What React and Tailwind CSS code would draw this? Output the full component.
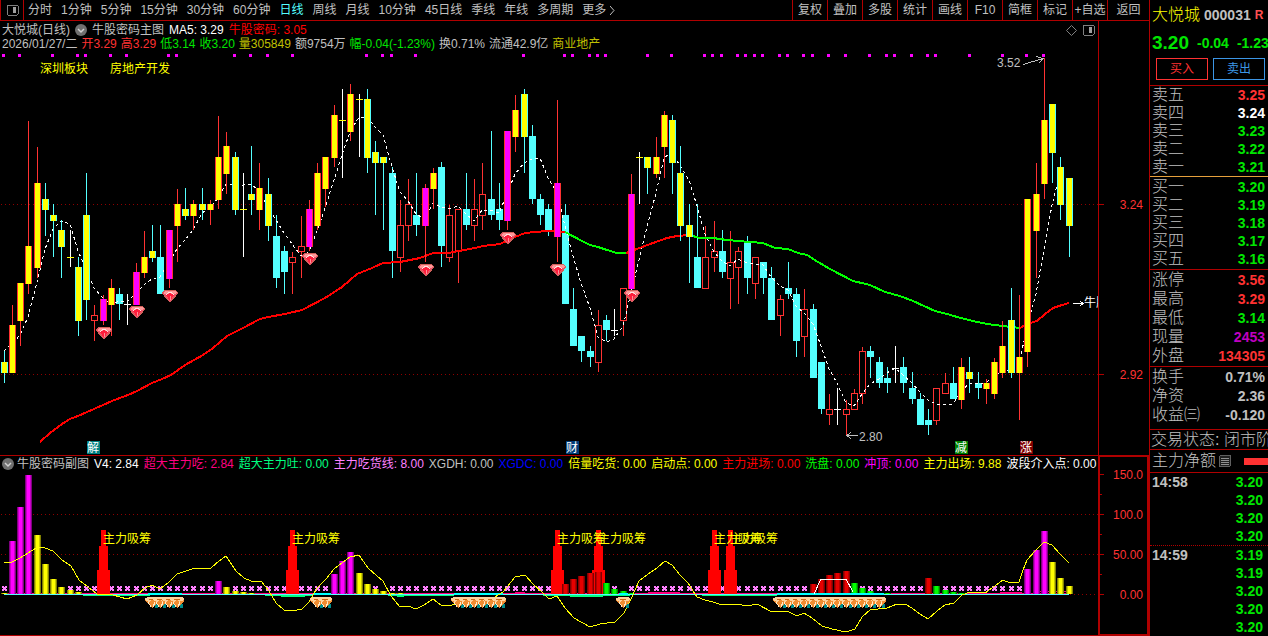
import { useState } from 'react';

const periods = ['分时', '1分钟', '5分钟', '15分钟', '30分钟', '60分钟', '日线', '周线', '月线', '10分钟', '45日线', '季线', '年线', '多周期'];
const tools = ['复权', '叠加', '多股', '统计', '画线', 'F10', '简框', '标记', '+自选'];

const quote = [
  { text: '2026/01/27/二', color: 'text-[#c0c0c0]' },
  { text: '开3.29', color: 'text-[#ff3232]' },
  { text: '高3.29', color: 'text-[#ff3232]' },
  { text: '低3.14', color: 'text-[#00e600]' },
  { text: '收3.20', color: 'text-[#00e600]' },
  { text: '量305849', color: 'text-[#c0c000]' },
  { text: '额9754万', color: 'text-[#c0c0c0]' },
  { text: '幅-0.04(-1.23%)', color: 'text-[#00e600]' },
  { text: '换0.71%', color: 'text-[#c0c0c0]' },
  { text: '流通42.9亿', color: 'text-[#c0c0c0]' },
  { text: '商业地产', color: 'text-[#c0c000]' },
];

const indicators = [
  { text: 'V4: 2.84', color: 'text-white' },
  { text: '超大主力吃: 2.84', color: 'text-[#ff0080]' },
  { text: '超大主力吐: 0.00', color: 'text-[#00ff80]' },
  { text: '主力吃货线: 8.00', color: 'text-[#ff80ff]' },
  { text: 'XGDH: 0.00', color: 'text-[#c0c0c0]' },
  { text: 'XGDC: 0.00', color: 'text-[#0000ff]' },
  { text: '倍量吃货: 0.00', color: 'text-[#ffff00]' },
  { text: '启动点: 0.00', color: 'text-[#ffff00]' },
  { text: '主力进场: 0.00', color: 'text-[#ff0000]' },
  { text: '洗盘: 0.00', color: 'text-[#00ff00]' },
  { text: '冲顶: 0.00', color: 'text-[#ff00ff]' },
  { text: '主力出场: 9.88', color: 'text-[#ffff00]' },
  { text: '波段介入点: 0.00', color: 'text-white' },
];

const RED = 'text-[#ff3232]';
const GREEN = 'text-[#00e600]';
const GRAY = 'text-[#c0c0c0]';

const asks = [
  ['卖五', '3.25', RED],
  ['卖四', '3.24', 'text-white'],
  ['卖三', '3.23', GREEN],
  ['卖二', '3.22', GREEN],
  ['卖一', '3.21', GREEN],
];
const bids = [
  ['买一', '3.20', GREEN],
  ['买二', '3.19', GREEN],
  ['买三', '3.18', GREEN],
  ['买四', '3.17', GREEN],
  ['买五', '3.16', GREEN],
];
const stats = [
  ['涨停', '3.56', RED],
  ['最高', '3.29', RED],
  ['最低', '3.14', GREEN],
  ['现量', '2453', 'text-[#c000c0]'],
  ['外盘', '134305', RED],
];
const ratios = [
  ['换手', '0.71%', GRAY],
  ['净资', '2.36', GRAY],
  ['收益㈢', '-0.120', GRAY],
];
const ticks1458 = [['14:58', '3.20', GREEN], ['', '3.20', GREEN], ['', '3.20', GREEN], ['', '3.20', GREEN]];
const ticks1459 = [['14:59', '3.19', GREEN], ['', '3.19', GREEN], ['', '3.20', GREEN], ['', '3.20', GREEN], ['', '3.20', GREEN]];

// [kind, high, body top, body bottom, low]
// yu/yd: yellow up/down, m: magenta, r: hollow up, c: down, w: doji, wy: yellow doji
const candles = [
  ['yd', 351, 362, 373, 383], ['yu', 305, 325, 373, 373], ['yu', 283, 283, 321, 346], ['yu', 121, 246, 284, 294],
  ['yu', 147, 183, 268, 278], ['yd', 183, 199, 210, 236], ['yd', 204, 215, 221, 257], ['yd', 220, 230, 247, 278],
  ['wy', 230, 257, 258, 267], ['yd', 257, 267, 321, 336], ['yd', 173, 215, 300, 320], ['r', 305, 315, 321, 341],
  ['m', 295, 299, 321, 325], ['yu', 279, 288, 305, 336], ['c', 288, 294, 304, 320], ['w', 294, 304, 305, 325],
  ['m', 263, 272, 305, 305], ['yu', 231, 257, 273, 278], ['yd', 225, 251, 258, 262], ['c', 225, 257, 294, 294],
  ['m', 230, 230, 279, 288], ['yu', 189, 204, 226, 262], ['yd', 188, 209, 216, 220], ['yu', 200, 204, 216, 230],
  ['yd', 188, 204, 210, 220], ['yu', 200, 204, 210, 225], ['yu', 116, 157, 200, 209], ['yu', 132, 146, 174, 194],
  ['yd', 152, 157, 210, 215], ['wy', 173, 209, 210, 257], ['yd', 146, 194, 200, 215], ['yu', 163, 188, 210, 230],
  ['yd', 178, 194, 226, 241], ['c', 215, 236, 278, 288], ['c', 246, 251, 272, 294], ['r', 252, 257, 263, 294],
  ['r', 216, 246, 252, 278], ['m', 200, 209, 247, 251], ['yu', 163, 173, 226, 230], ['yu', 157, 157, 189, 207],
  ['yu', 105, 115, 158, 167], ['wy', 89, 120, 121, 178], ['yu', 84, 94, 132, 141], ['wy', 94, 99, 100, 157],
  ['yd', 89, 99, 158, 173], ['yd', 141, 152, 163, 215], ['yd', 157, 157, 163, 230], ['c', 167, 173, 251, 278],
  ['r', 200, 225, 258, 272], ['r', 179, 204, 226, 241], ['c', 173, 215, 225, 236], ['m', 184, 188, 226, 262],
  ['yu', 168, 173, 189, 209], ['c', 162, 167, 246, 267], ['r', 205, 215, 258, 262], ['r', 209, 209, 252, 283],
  ['c', 173, 209, 225, 230], ['r', 179, 209, 226, 241], ['r', 163, 194, 216, 230], ['c', 131, 199, 215, 220],
  ['c', 183, 209, 220, 230], ['m', 131, 131, 221, 230], ['yu', 95, 110, 137, 152], ['yd', 89, 94, 137, 173],
  ['c', 125, 136, 199, 204], ['c', 194, 199, 215, 225], ['c', 204, 209, 230, 236], ['m', 100, 183, 237, 262],
  ['c', 204, 215, 304, 304], ['c', 288, 309, 346, 346], ['c', 336, 336, 351, 362], ['c', 346, 351, 357, 367],
  ['r', 310, 325, 363, 372], ['c', 315, 320, 330, 341], ['w', 309, 330, 331, 336], ['r', 288, 288, 321, 336],
  ['m', 174, 194, 289, 289], ['wy', 152, 157, 158, 204], ['yd', 157, 157, 168, 194], ['yu', 137, 157, 174, 178],
  ['yu', 111, 115, 147, 178], ['yd', 115, 120, 163, 194], ['yd', 146, 173, 226, 241], ['yd', 204, 225, 237, 283],
  ['c', 204, 257, 288, 288], ['r', 226, 257, 289, 289], ['r', 221, 251, 258, 272], ['c', 230, 251, 272, 278],
  ['r', 231, 262, 279, 309], ['r', 247, 251, 268, 304], ['c', 236, 242, 278, 294], ['r', 257, 257, 284, 299],
  ['c', 262, 262, 278, 294], ['c', 267, 278, 320, 320], ['r', 295, 299, 316, 336], ['c', 262, 288, 294, 299],
  ['c', 288, 294, 341, 357], ['r', 289, 309, 337, 357], ['c', 304, 309, 378, 378], ['c', 362, 362, 409, 414],
  ['r', 394, 409, 415, 425], ['w', 388, 409, 410, 425], ['r', 400, 409, 415, 435], ['r', 389, 393, 410, 410],
  ['r', 347, 351, 394, 404], ['c', 346, 351, 357, 378], ['c', 357, 362, 383, 388], ['c', 367, 378, 383, 393],
  ['w', 346, 368, 369, 383], ['c', 357, 367, 383, 393], ['c', 372, 388, 399, 404], ['c', 393, 399, 425, 425],
  ['c', 409, 420, 425, 435], ['r', 388, 388, 421, 425], ['r', 373, 383, 394, 394], ['c', 367, 383, 399, 399],
  ['yu', 358, 367, 400, 409], ['yd', 357, 372, 379, 393], ['c', 372, 383, 388, 399], ['yu', 379, 383, 389, 404],
  ['yu', 358, 362, 394, 399], ['yu', 321, 346, 373, 378], ['yd', 288, 320, 373, 378], ['yu', 295, 357, 373, 420],
  ['yu', 199, 199, 352, 367], ['yu', 163, 194, 231, 278], ['yu', 58, 120, 184, 199], ['yd', 104, 104, 153, 183],
  ['yd', 157, 167, 205, 220], ['yd', 178, 178, 226, 257],
];

const xOf = (i) => Math.floor(4 + i * 8.256);

const closes = candles.map(([kind, , top, bottom]) => (kind === 'c' || kind === 'yd' ? bottom : top));
const ma5 = candles
  .map((_, i) => {
    if (i < 4) return `${xOf(i)},${[351, 344, 335, 317][i]}`;
    const sum = closes.slice(i - 4, i + 1).reduce((a, b) => a + b, 0);
    return `${xOf(i)},${Math.round(sum / 5)}`;
  })
  .join(' ');

const trend = [
  ['#ff0000', '40,442 50,433 62,424 70,419 78,416 103,405 112,401 128,395 137,391 152,383 162,379 171,375 185,365 203,355 213,348 227,336 243,328 260,319 268,317 285,314 302,310 325,298 342,287 357,274 372,268 383,263 400,262 420,258 433,253 448,253 475,248 483,246 500,244 515,237 525,233 547,231 565,232'],
  ['#00ff00', '565,232 582,241 590,245 598,247 607,250 617,253 626,253'],
  ['#ff0000', '626,253 637,249 653,243 667,238 677,236 689,235'],
  ['#00ff00', '689,235 700,238 713,238 727,240 738,241 750,242 763,243 775,248 788,249 798,253 807,255 818,262 830,269 853,281 870,285 885,292 900,296 913,301 935,311 947,314 957,317 973,321 987,324 1003,326 1020,328'],
  ['#ff0000', '1020,328 1027,324 1037,321 1045,314 1053,308 1062,305 1069,303'],
];

const signalDots = [3, 19, 52, 77, 85, 110, 126, 168, 176, 234, 250, 267, 292, 366, 382, 391, 415, 523, 564, 572, 589, 597, 605, 647, 671, 704, 712, 721, 737, 745, 754, 762, 779, 787, 803, 812, 828, 845, 869, 886, 894, 911, 927, 935, 969, 1002, 1026, 1043];
const redGems = [[104, 333], [137, 312], [170, 296], [310, 259], [426, 270], [508, 238], [558, 270], [632, 296]];
const eventTags = [
  [87, '#008080', '解'],
  [566, '#003c78', '财'],
  [955, '#008000', '减'],
  [1020, '#800000', '涨'],
];

const barShades = {
  m: ['#800080', '#c800c8', '#ff00ff'],
  y: ['#808000', '#c8c800', '#ffff00'],
  r: ['#800000', '#b40000', '#e60000'],
  g: ['#008000', '#00c800', '#00ff00'],
};
// [candle index, shade, top]
const bars = [
  [0, 'y', 593], [1, 'm', 541], [2, 'm', 507], [3, 'm', 475], [4, 'y', 535], [5, 'y', 564], [6, 'y', 579], [7, 'y', 587], [8, 'y', 590], [9, 'y', 592],
  [26, 'm', 581], [27, 'y', 587], [28, 'y', 591], [29, 'y', 592], [30, 'y', 593],
  [40, 'm', 574], [41, 'm', 561], [42, 'm', 552], [43, 'y', 573], [44, 'y', 584], [45, 'y', 589], [46, 'y', 591], [47, 'y', 593], [48, 'y', 593],
  [68, 'r', 584], [69, 'r', 579], [70, 'r', 576], [71, 'r', 573], [72, 'r', 572], [73, 'g', 583], [74, 'g', 589], [75, 'g', 591], [76, 'g', 593],
  [98, 'r', 584], [99, 'r', 579], [100, 'r', 575], [101, 'r', 573], [102, 'r', 571], [103, 'g', 583], [104, 'g', 588], [105, 'g', 591], [107, 'g', 593],
  [112, 'r', 578], [113, 'g', 586], [114, 'g', 590], [115, 'g', 592], [116, 'g', 593],
  [124, 'm', 569], [125, 'm', 550], [126, 'm', 531], [127, 'y', 562], [128, 'y', 578], [129, 'y', 586],
];
const towers = [12, 35, 67, 72, 86, 88];
const noCross = [1, 2, 3, 4, 5, 6, 7, 12, 26, 27, 35, 40, 41, 42, 43, 44, 46, 67, 68, 69, 70, 71, 72, 73, 75, 86, 88, 98, 99, 100, 101, 102, 103, 112, 113, 124, 125, 126, 127, 128, 129];
const orangeGems = [18, 19, 20, 21, 38, 39, 55, 56, 57, 58, 59, 60, 75, 94, 95, 96, 97, 98, 99, 100, 101, 102, 103, 104, 105, 106];

const flowLine = '4,562 12,562 20,558 28,553 38,547 45,548 53,551 62,560 71,566 79,580 88,587 97,594 113,595 120,597 127,599 137,595 145,588 152,585 160,589 168,583 177,574 192,569 211,568 219,561 226,556 236,571 244,578 251,581 261,581 269,591 276,603 284,610 292,611 302,609 309,602 317,588 326,579 334,569 342,563 350,557 359,555 368,568 377,576 383,581 391,596 400,607 408,606 416,609 424,605 433,599 441,605 452,605 470,604 490,600 503,592 515,577 525,575 533,584 543,593 549,599 557,596 565,608 574,618 590,627 600,624 615,622 624,613 632,597 639,581 648,574 657,568 665,561 672,565 680,575 688,583 697,597 705,600 713,602 722,605 737,604 747,606 757,604 772,612 787,611 797,616 804,613 812,618 822,626 832,629 846,632 855,629 862,617 870,610 887,608 897,604 905,604 912,608 920,614 928,619 937,611 945,605 954,603 962,595 970,592 985,593 1003,580 1010,583 1019,582 1023,570 1027,560 1035,551 1044,542 1052,545 1060,554 1069,563';

function Candle({ i, data }) {
  const [kind, high, top, bottom, low] = data;
  const x = xOf(i);
  const h = bottom - top;
  if (kind === 'w' || kind === 'wy') {
    return (
      <g>
        <rect x={x} y={high} width={1} height={low - high} fill="#fff" />
        <rect x={x - 3} y={top} width={7} height={1} fill={kind === 'wy' ? '#ffff00' : '#fff'} />
      </g>
    );
  }
  const edge = kind === 'c' || kind === 'yd' ? '#54ffff' : '#ff3232';
  const inner = { yu: '#ffff00', yd: '#ffff00', m: '#ff00ff' }[kind];
  return (
    <g>
      <rect x={x} y={high} width={1} height={low - high} fill={edge} />
      <rect x={x - 3} y={top} width={7} height={h} fill={edge} />
      {kind === 'r' && <rect x={x - 2} y={top + 1} width={5} height={h - 2} fill="#000" />}
      {inner && <rect x={x - 2} y={top} width={5} height={h} fill={inner} />}
    </g>
  );
}

function RedGem({ x, y }) {
  return (
    <g transform={`translate(${x} ${y})`}>
      <path d="M-5 -6H5L8 -3L0 6L-8 -3Z" fill="#f0506a" />
      <path d="M-5 -5H5L7 -3L3 -1L0 -3L-3 -1L-7 -3Z" fill="#ff9a9a" />
      <path d="M-4 -1Q0 -6 4 -1" fill="none" stroke="#ffe6e6" strokeWidth={1} />
      <path d="M-4 -1L0 -3L4 -1L0 5Z" fill="#ff1e3c" />
      <path d="M0 0V4" stroke="#ff8c96" strokeWidth={1} />
      <path d="M-8 -3L-5 -6H5L8 -3L0 6Z" fill="none" stroke="#d2605a" strokeWidth={1} />
    </g>
  );
}

function OrangeGem({ x }) {
  return (
    <g transform={`translate(${x} 602)`}>
      <path d="M2 2H6V6H3Z" fill="#008c8c" />
      <path d="M-7 -4L-4 -5H5L7 -4V-1L0 6L-7 -1Z" fill="#f08c32" />
      <path d="M-7 -4L-4 -5H5L7 -4V-2L2 0L0 -2L-3 0L-7 -2Z" fill="#ffd29b" />
      <path d="M-4 0L-1 5M3 0L1 5" stroke="#ffebc8" strokeWidth={1} />
      <path d="M-3 -3H3" stroke="#c86414" strokeWidth={1} />
    </g>
  );
}

function Tower({ x }) {
  return (
    <g fill="#ff0000">
      <rect x={x - 2} y={530} width={5} height={16} />
      <rect x={x - 4} y={546} width={9} height={24} />
      <rect x={x - 6} y={570} width={13} height={24} />
    </g>
  );
}

function PriceChart() {
  const under = (k) => k === 'c' || k === 'r' || k === 'w';
  return (
    <svg className="block w-full h-[404px] text-[12px]" viewBox="0 51 1098 404" preserveAspectRatio="xMinYMin slice" shapeRendering="crispEdges">
      <g stroke="#900000" strokeDasharray="1 3">
        <path d="M1 204.5H1098" />
        <path d="M1 374.5H1098" />
      </g>
      {signalDots.map((x) => <rect key={x} x={x - 1} y={54} width={3} height={3} fill="#ff00ff" />)}
      <text x={40} y={73} fill="#ffff00">深圳板块</text>
      <text x={110} y={73} fill="#ffff00">房地产开发</text>

      {candles.map((c, i) => under(c[0]) && <Candle key={i} i={i} data={c} />)}
      <polyline points={ma5} fill="none" stroke="#fff" strokeWidth={1} strokeDasharray="3 3" />
      {trend.map(([color, points]) => (
        <polyline key={points} points={points} fill="none" stroke={color} strokeWidth={2} />
      ))}
      {candles.map((c, i) => !under(c[0]) && <Candle key={i} i={i} data={c} />)}
      {redGems.map(([x, y]) => <RedGem key={x} x={x} y={y} />)}

      {/* high / low callouts */}
      <g fill="none" stroke="#c0c0c0">
        <path d="M1023 64.5L1043 58.5M1036 56.5L1043 58.5L1039 63" />
        <path d="M847 435.5H858M851 432L847 435.5L851 439" />
      </g>
      <text x={997} y={67} fill="#c0c0c0">3.52</text>
      <text x={859} y={441} fill="#c0c0c0">2.80</text>

      <path d="M1073 303.5H1083M1080 301L1083 303.5L1080 306" fill="none" stroke="#fff" />
      <text x={1084} y={307} fill="#fff">牛股密码</text>

      {eventTags.map(([x, fill, label]) => (
        <g key={label}>
          <rect x={x} y={441} width={13} height={13} fill={fill} />
          <text x={x} y={452} fill="#fff">{label}</text>
        </g>
      ))}
    </svg>
  );
}

function FlowChart() {
  return (
    <svg className="block w-full h-[163px] text-[12px]" viewBox="0 472 1098 163" preserveAspectRatio="xMinYMin slice" shapeRendering="crispEdges">
      <g stroke="#900000" strokeDasharray="1 3">
        <path d="M1 514.5H1098" />
        <path d="M1 554.5H1098" />
        <path d="M1070 594.5H1098" />
      </g>
      {candles.map((_, i) => !noCross.includes(i) && (
        <path
          key={i}
          d={`M${xOf(i) - 2} 586h2v1h1v-1h2v2h-1v1h1v2h-2v-1h-1v1h-2v-2h1v-1h-1z`}
          fill="#ff80ff"
        />
      ))}
      <path d="M4 593.5H1069" stroke="#ff0080" />
      <path d="M515 592.5H525M648 592.5H680M1000 592.5H1022M1035 591.5H1069" stroke="#ff0080" />
      {towers.map((i) => <Tower key={i} x={xOf(i)} />)}
      {bars.map(([i, shade, top]) => {
        const [dark, mid, light] = barShades[shade];
        const x = xOf(i);
        return (
          <g key={i}>
            <rect x={x - 3} y={top} width={7} height={594 - top} fill={dark} />
            <rect x={x - 2} y={top} width={5} height={594 - top} fill={mid} />
            <rect x={x - 1} y={top} width={3} height={594 - top} fill={light} />
          </g>
        );
      })}
      <path d="M4 594.5H1069" stroke="#54ffff" />
      <g stroke="#00ff80">
        <path d="M83 595.5H150M265 595.5H313M388 595.5H454M543 595.5H630M702 595.5H777" />
        <path d="M281 596.5H305M397 596.5H404M570 596.5H603" />
      </g>
      <path d="M148 594H182M313 594H331M454 594H503M619 594H628M777 594H884" stroke="#00ffff" strokeWidth={2} />
      <polyline points={flowLine} fill="none" stroke="#ffff00" />
      <polyline points="814,594 821,579 846,579 853,592" fill="none" stroke="#fff" />
      {orangeGems.map((i) => <OrangeGem key={i} x={xOf(i)} />)}
      {towers.map((i) => (
        <text key={i} x={xOf(i)} y={543} fill="#ffff00">主力吸筹</text>
      ))}
    </svg>
  );
}

function PanelIcon({ className }) {
  return (
    <svg className={className} viewBox="0 0 13 12" shapeRendering="crispEdges">
      <rect x={1} y={1} width={11} height={10} rx={1} fill="none" stroke="#808080" strokeWidth={1} />
      <rect x={7} y={3} width={3} height={6} fill="#a0a0a0" />
    </svg>
  );
}

function Toggle({ label }) {
  return (
    <button aria-label={label} className="shrink-0">
      <svg className="block w-3 h-3" viewBox="0 0 12 12">
        <circle cx={6} cy={6} r={6} fill="#707070" />
        <path d="M3 5L6 8L9 5" fill="none" stroke="#d0d0d0" strokeWidth={1.5} />
      </svg>
    </button>
  );
}

function Rows({ rows, rowClass }) {
  return (
    <table className="w-full border-collapse">
      <tbody>
        {rows.map(([label, value, color], i) => (
          <tr key={i} className={rowClass}>
            <th scope="row" className="p-0 pl-[2px] text-left font-light text-base leading-none">{label}</th>
            <td className={`p-0 pr-[3px] text-right font-bold text-sm leading-none ${color}`}>{value}</td>
          </tr>
        ))}
      </tbody>
    </table>
  );
}

function Ticks({ rows }) {
  return (
    <table className="w-full border-collapse">
      <tbody>
        {rows.map(([time, price, color], i) => (
          <tr key={i} className="h-[18px]">
            <td className="p-0 pl-[2px] text-left font-bold text-sm leading-none">{time}</td>
            <td className={`p-0 pr-[5px] text-right font-bold text-sm leading-none ${color}`}>{price}</td>
          </tr>
        ))}
      </tbody>
    </table>
  );
}

function Sidebar() {
  return (
    <aside className="w-[119px] shrink-0 overflow-hidden border-l border-[#b00000]">
      <div className="flex items-center h-[29px] pl-[2px] gap-[4px] whitespace-nowrap">
        <span className="text-base leading-none text-[#ffff00] font-light">大悦城</span>
        <span className="text-sm leading-none font-bold">000031</span>
        <span className="text-[12px] leading-none font-bold text-[#ff5050]">R</span>
      </div>
      <div className="flex items-center h-[27px] pl-[2px] gap-[8px] whitespace-nowrap font-bold text-[#00e600]">
        <span className="text-[19px] leading-none">3.20</span>
        <span className="text-sm leading-none">-0.04</span>
        <span className="text-sm leading-none">-1.23%</span>
      </div>
      <div className="flex h-[29px] pt-[2px] pl-[6px] pr-[3px] gap-[5px] text-[12px]">
        <button className="flex-1 h-[22px] border border-[#ff3232] text-[#ff3232] leading-none">买入</button>
        <button className="flex-1 h-[22px] border border-[#3c96e6] text-[#3c96e6] leading-none">卖出</button>
      </div>
      <div className="border-t border-[#b00000]">
        <Rows rows={asks} rowClass="h-[18px]" />
      </div>
      <div className="border-t border-[#e6a03c] pt-[1px]">
        <Rows rows={bids} rowClass="h-[18px]" />
      </div>
      <div className="border-t border-[#b00000] mt-[1px]">
        <Rows rows={stats} rowClass="h-[19px]" />
      </div>
      <div className="border-t border-[#b00000] mt-[1px] pb-[5px]">
        <Rows rows={ratios} rowClass="h-[19px]" />
      </div>
      <div className="flex items-center h-[20px] border-t border-[#b00000] pl-[1px] text-base leading-none font-light whitespace-nowrap">
        交易状态: 闭市阶段
      </div>
      <div className="flex items-center h-[23px] border-t border-[#b00000] pl-[2px] whitespace-nowrap">
        <span className="text-base leading-none font-light">主力净额</span>
        <svg className="w-3 h-3 ml-[3px] shrink-0" viewBox="0 0 12 12" shapeRendering="crispEdges">
          <rect x={0} y={0} width={12} height={12} rx={2} fill="#606060" />
          <rect x={1} y={1} width={10} height={10} fill="#202020" />
          <path d="M2 3.5H10M2 5.5H10M2 7.5H10M2 9.5H10" stroke="#909090" />
        </svg>
        <span className="flex-1 ml-[13px] h-[7px] bg-[#ff3232]" />
      </div>
      <div className="border-t border-[#b00000]">
        <Ticks rows={ticks1458} />
      </div>
      <div className="border-t border-dotted border-[#b00000]">
        <Ticks rows={ticks1459} />
      </div>
    </aside>
  );
}

function App() {
  const [period, setPeriod] = useState('日线');

  return (
    <div className="flex h-[636px] overflow-hidden bg-black text-[#c0c0c0] font-['Liberation_Sans','Noto_Sans_CJK_SC',sans-serif]">
      <div className="flex-1 min-w-0 flex flex-col">
        <nav className="flex h-[21px] border-b border-l border-[#b00000] text-[12px] leading-none whitespace-nowrap">
          <button aria-label="侧栏" className="w-[23px] shrink-0 flex items-center justify-center border-r border-[#b00000]">
            <PanelIcon className="w-[13px] h-3" />
          </button>
          <div className="flex-1 min-w-0 overflow-hidden flex items-center gap-[9px] pl-[4px]">
            {periods.map((p) => (
              <button key={p} onClick={() => setPeriod(p)} className={p === period ? 'text-[#54ffff]' : ''}>
                {p}
              </button>
            ))}
            <button className="flex items-center gap-[4px]">
              更多
              <svg className="w-[5px] h-[9px]" viewBox="0 0 5 9">
                <path d="M0 0L4 4.5L0 9" fill="none" stroke="#c0c0c0" />
              </svg>
            </button>
          </div>
          {tools.map((t) => (
            <button key={t} className="w-[35px] shrink-0 border-l border-[#b00000]">{t}</button>
          ))}
          <button className="w-[42px] shrink-0 border-l border-[#b00000]">返回</button>
        </nav>

        <section className="flex h-[435px] border-b border-[#b00000]">
          <div className="flex-1 min-w-0">
            <div className="pt-[2px] text-[12px] whitespace-nowrap">
              <div className="flex items-center h-[14px] pl-[2px] gap-[5px] leading-none">
                <span>大悦城(日线)</span>
                <Toggle label="主图指标" />
                <span>牛股密码主图</span>
                <span className="text-white">MA5: 3.29</span>
                <span className="text-[#ff0000]">牛股密码: 3.05</span>
                <svg className="ml-auto w-[11px] h-[11px] shrink-0" viewBox="0 0 11 11">
                  <path d="M5.5 0.5L10.5 5.5L5.5 10.5L0.5 5.5Z" fill="none" stroke="#808080" />
                </svg>
                <PanelIcon className="w-[13px] h-3 mr-[3px] shrink-0" />
              </div>
              <div className="flex items-center h-[14px] pl-[2px] gap-[4px] leading-none">
                {quote.map((q) => <span key={q.text} className={q.color}>{q.text}</span>)}
              </div>
            </div>
            <PriceChart />
          </div>
          <svg className="w-[51px] shrink-0 h-[434px] border-l border-[#b00000] text-[12px]" viewBox="0 21 50 434" shapeRendering="crispEdges">
            <path d="M0 204.5H5M0 374.5H5" stroke="#b00000" />
            <text x={44} y={209} textAnchor="end" fill="#ff3232">3.24</text>
            <text x={44} y={379} textAnchor="end" fill="#ff3232">2.92</text>
          </svg>
        </section>

        <section className="flex h-[180px]">
          <div className="flex-1 min-w-0 border-b border-[#b00000]">
            <div className="flex items-center h-[16px] pl-[2px] gap-[5px] text-[12px] leading-none whitespace-nowrap overflow-hidden">
              <div className="flex items-center gap-[3px]">
                <Toggle label="副图指标" />
                <span>牛股密码副图</span>
              </div>
              {indicators.map((d) => <span key={d.text} className={d.color}>{d.text}</span>)}
            </div>
            <FlowChart />
          </div>
          <svg className="w-[51px] shrink-0 h-[180px] border-2 border-t border-[#b00000] text-[12px]" viewBox="0 457 47 177" shapeRendering="crispEdges">
            <path d="M0 474.5H4M0 494.5H2M0 514.5H4M0 534.5H2M0 554.5H4M0 574.5H2M0 594.5H4" stroke="#b00000" />
            <g fill="#ff3232" textAnchor="end">
              <text x={43} y={479}>150.0</text>
              <text x={43} y={519}>100.0</text>
              <text x={43} y={559}>50.00</text>
              <text x={43} y={599}>0.00</text>
            </g>
          </svg>
        </section>
      </div>
      <Sidebar />
    </div>
  );
}

export default App;
